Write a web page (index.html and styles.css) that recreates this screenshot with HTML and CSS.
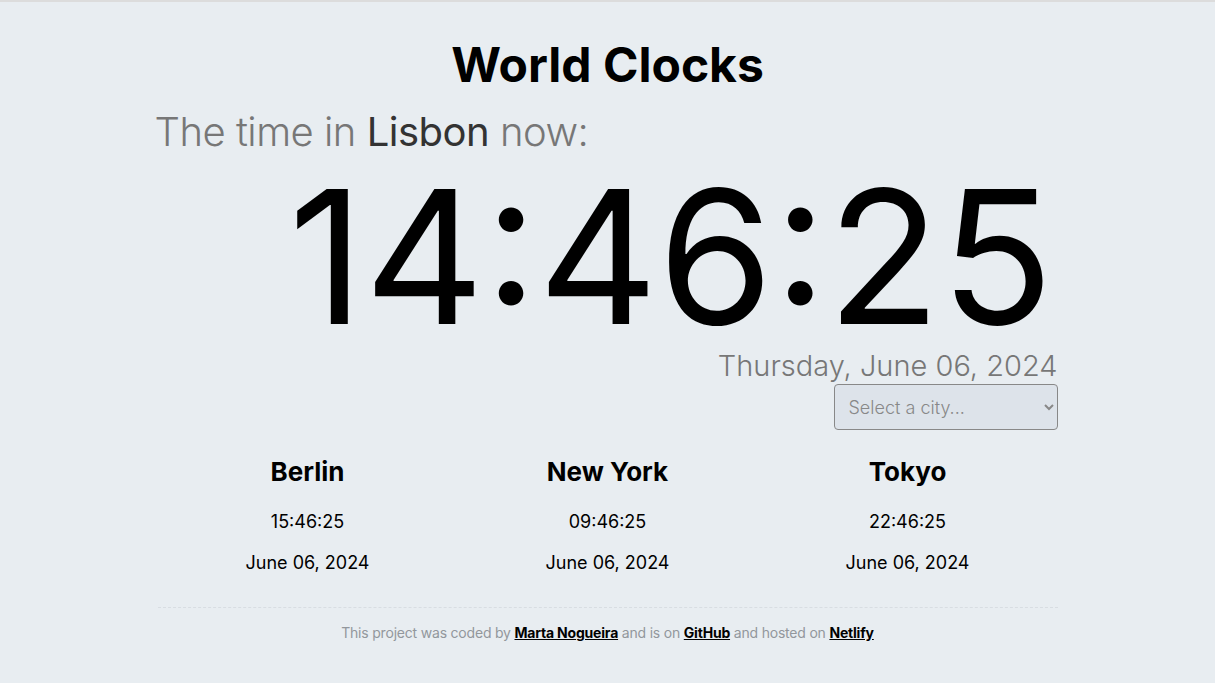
FILE: index.html
```html
<!DOCTYPE html>
<html lang="en">
<head>
<meta charset="utf-8">
<title>World Clocks</title>
<link rel="stylesheet" href="styles.css">
</head>
<body>
<div class="container">
  <h1 class="title">World Clocks</h1>
  <h2 class="subtitle">The time in <span class="city">Lisbon</span> now:</h2>
  <div class="main-time">14:46:25</div>
  <div class="main-date">Thursday, June 06, 2024</div>
  <div class="select-row">
    <select class="city-select">
      <option>Select a city...</option>
    </select>
  </div>
  <div class="cities">
    <div class="city-card">
      <h3 class="city-name">Berlin</h3>
      <div class="city-time">15:46:25</div>
      <div class="city-date">June 06, 2024</div>
    </div>
    <div class="city-card">
      <h3 class="city-name">New York</h3>
      <div class="city-time">09:46:25</div>
      <div class="city-date">June 06, 2024</div>
    </div>
    <div class="city-card">
      <h3 class="city-name">Tokyo</h3>
      <div class="city-time">22:46:25</div>
      <div class="city-date">June 06, 2024</div>
    </div>
  </div>
  <footer class="footer">
    This project was coded by <a href="#">Marta Nogueira</a> and is on <a href="#">GitHub</a> and hosted on <a href="#">Netlify</a>
  </footer>
</div>
</body>
</html>
```
FILE: styles.css
```css
html, body {
  margin: 0;
  padding: 0;
}
body {
  background: #e8edf1;
  border-top: 2px solid #dcdcdc;
  font-family: Inter, "Noto Sans", sans-serif;
  color: #000;
  min-height: 681px;
}
.container {
  width: 900px;
  margin: 0 auto;
}
.title {
  margin: 0;
  padding-top: 33px;
  text-align: center;
  font-size: 48px;
  font-weight: 700;
  line-height: 60px;
}
.subtitle {
  margin: 11px 0 0 -3px;
  font-size: 40px;
  font-weight: 300;
  color: #777;
  line-height: 52px;
  letter-spacing: -0.5px;
}
.subtitle .city {
  color: #333;
  font-weight: 400;
}
.main-time {
  margin-top: 9px;
  text-align: right;
  font-size: 186px;
  font-weight: 400;
  line-height: 180px;
  padding-right: 4px;
}
.main-date {
  margin-top: 4px;
  text-align: right;
  font-size: 29px;
  font-weight: 300;
  color: #777;
  line-height: 30px;
}
.select-row {
  display: flex;
  justify-content: flex-end;
  margin-top: 3px;
}
.city-select {
  width: 224px;
  height: 46px;
  background: #dde3ea;
  border: 1px solid #888;
  border-radius: 4px;
  font-family: inherit;
  font-size: 18px;
  font-weight: 300;
  color: #888;
  padding: 0 10px;
}
.cities {
  display: grid;
  grid-template-columns: 1fr 1fr 1fr;
  margin-top: 24px;
}
.city-card {
  text-align: center;
}
.city-name {
  margin: 0;
  font-size: 26px;
  font-weight: 700;
  line-height: 36px;
}
.city-time {
  margin-top: 19px;
  font-size: 18px;
  line-height: 26px;
}
.city-date {
  margin-top: 15px;
  font-size: 18px;
  line-height: 26px;
}
.footer {
  margin-top: 31px;
  border-top: 1px dashed #d8dde2;
  padding-top: 15px;
  text-align: center;
  font-size: 14px;
  line-height: 20px;
  color: #92979c;
  letter-spacing: -0.2px;
}
.footer a {
  color: #000;
  font-weight: 700;
}
```
